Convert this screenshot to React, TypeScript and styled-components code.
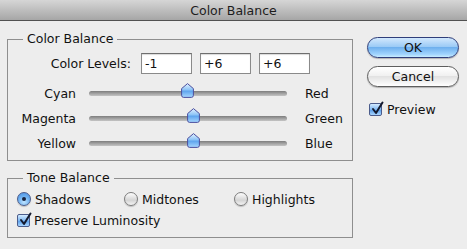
import styled, { createGlobalStyle } from 'styled-components';

const GlobalStyle = createGlobalStyle`
  html, body {
    margin: 0;
    padding: 0;
    background: #ededed;
  }
  body {
    font-family: "DejaVu Sans", "Liberation Sans", sans-serif;
    font-size: 12.5px;
    color: #111;
  }
`;

const Window = styled.div`
  width: 467px;
  height: 249px;
  background: #ededed;
  overflow: hidden;
`;

const TitleBar = styled.div`
  height: 20px;
  border-bottom: 1px solid #515151;
  background: linear-gradient(#d6d6d6, #a6a6a6);
  display: flex;
  align-items: center;
  justify-content: center;
  font-size: 12.5px;
  color: #1c1c1c;
`;

const Main = styled.div`
  display: flex;
  padding: 10px 0 0 7px;
`;

const LeftColumn = styled.div`
  width: 346px;
  display: flex;
  flex-direction: column;
  gap: 9px;
`;

const Group = styled.fieldset<{ $pb: number }>`
  margin: 0;
  padding: 0 0 ${({ $pb }) => $pb}px 0;
  border: 1px solid #8e8e8e;
  min-width: 0;
`;

const Legend = styled.legend`
  margin-left: 15px;
  padding: 0 4px;
  line-height: 16px;
  font-size: 12.5px;
`;

const LevelsRow = styled.div`
  display: flex;
  align-items: center;
  margin-top: 6px;
  height: 21px;
`;

const LevelsLabel = styled.span`
  width: 123px;
  text-align: right;
  margin-right: 10px;
`;

const Inputs = styled.div`
  display: flex;
  gap: 8px;
`;

const NumberBox = styled.div`
  box-sizing: border-box;
  width: 51px;
  height: 21px;
  border: 1px solid #8a8a8a;
  border-top-color: #6e6e6e;
  background: #fff;
  box-shadow: inset 0 1px 1px rgba(0, 0, 0, 0.15);
  padding: 1px 0 0 3px;
  line-height: 17px;
`;

const Sliders = styled.div`
  margin-top: 7px;
`;

const SliderRow = styled.div`
  display: grid;
  grid-template-columns: 68px 198px auto;
  column-gap: 13px;
  align-items: center;
  height: 25px;

  & > span:last-child {
    margin-left: 5px;
  }
`;

const SideLabel = styled.span<{ $align: 'left' | 'right' }>`
  text-align: ${({ $align }) => $align};
`;

const TrackArea = styled.div`
  position: relative;
  height: 25px;
`;

const Track = styled.div`
  position: absolute;
  left: 0;
  right: 0;
  top: 10px;
  height: 5px;
  border-radius: 3px;
  background: linear-gradient(#7d7d7d, #a9a9a9 60%, #c4c4c4);
`;

const Thumb = styled.svg`
  position: absolute;
  top: 2px;
  width: 13px;
  height: 15px;
  margin-left: -6.5px;
`;

const RadioRow = styled.div`
  display: grid;
  grid-template-columns: 107px 110px auto;
  margin: 5px 0 0 9px;
  height: 16px;
  align-items: center;
`;

const Choice = styled.label`
  display: flex;
  align-items: center;
  gap: 4px;
  white-space: nowrap;
`;

const CheckRow = styled.div`
  margin: 5px 0 0 9px;
  height: 16px;
  display: flex;
  align-items: center;
`;

const Radio = styled.span<{ $on?: boolean }>`
  position: relative;
  box-sizing: border-box;
  width: 14px;
  height: 14px;
  border-radius: 50%;
  border: 1px solid ${({ $on }) => ($on ? '#4a5c8c' : '#7c7c7c')};
  background: ${({ $on }) =>
    $on
      ? 'radial-gradient(circle at 50% 75%, #bfe4ff, #6aaef0 55%, #4a8ee0)'
      : 'linear-gradient(#fdfdfd, #d4d4d4 60%, #f4f4f4)'};
  box-shadow: 0 1px 1px rgba(0, 0, 0, 0.2);

  &::after {
    content: '';
    display: ${({ $on }) => ($on ? 'block' : 'none')};
    position: absolute;
    left: 4px;
    top: 4px;
    width: 4px;
    height: 4px;
    border-radius: 50%;
    background: #17233f;
  }
`;

const Box = styled.span`
  position: relative;
  box-sizing: border-box;
  width: 13px;
  height: 13px;
  border-radius: 2px;
  border: 1px solid #4b5c8b;
  background: linear-gradient(#d4ebff, #7fb8f2 50%, #5b9fea 55%, #a9d6ff);
  flex-shrink: 0;

  svg {
    position: absolute;
    left: 0;
    top: -3px;
    width: 14px;
    height: 14px;
  }
`;

const RightColumn = styled.div`
  margin: 6px 0 0 14px;
  width: 92px;
  display: flex;
  flex-direction: column;
`;

const Button = styled.div<{ $primary?: boolean }>`
  box-sizing: border-box;
  height: 21px;
  border-radius: 11px;
  display: flex;
  align-items: center;
  justify-content: center;
  border: 1px solid ${({ $primary }) => ($primary ? '#2f3e7a' : '#5e5e5e')};
  background: ${({ $primary }) =>
    $primary
      ? 'linear-gradient(#d2e8fd, #9ccbf6 45%, #6fb0ee 50%, #9fd3fd 85%, #c8ecff)'
      : 'linear-gradient(#ffffff, #f1f1f1 45%, #e2e2e2 50%, #f6f6f6 85%, #ffffff)'};
  box-shadow: 0 1px 1px rgba(0, 0, 0, 0.25);
  margin-bottom: ${({ $primary }) => ($primary ? '8px' : '0')};
`;

const PreviewRow = styled.div`
  display: flex;
  align-items: center;
  gap: 5px;
  margin: 15px 0 0 2px;
`;

const Check = () => (
  <Box>
    <svg viewBox="0 0 14 14">
      <path d="M3 8 L6 12 L12.5 1.5" fill="none" stroke="#141a2e" strokeWidth="2" strokeLinecap="round" strokeLinejoin="round" />
    </svg>
  </Box>
);

const sliders = [
  { left: 'Cyan', right: 'Red', value: -1 },
  { left: 'Magenta', right: 'Green', value: 6 },
  { left: 'Yellow', right: 'Blue', value: 6 },
];

const TRACK = 198;
const THUMB = 12;

const SliderThumb = ({ value }: { value: number }) => {
  const x = THUMB / 2 + ((value + 100) / 200) * (TRACK - THUMB);
  return (
    <Thumb viewBox="0 0 13 15" style={{ left: x }}>
      <defs>
        <linearGradient id={`tg${value}`} x1="0" y1="0" x2="0" y2="1">
          <stop offset="0" stopColor="#e4f2ff" />
          <stop offset="0.45" stopColor="#8cc3f6" />
          <stop offset="0.55" stopColor="#5fa5ee" />
          <stop offset="1" stopColor="#a8d8ff" />
        </linearGradient>
      </defs>
      <path
        d="M6.5 0.6 L12.4 5.6 V12.3 Q12.4 14.4 10.4 14.4 H2.6 Q0.6 14.4 0.6 12.3 V5.6 Z"
        fill={`url(#tg${value})`}
        stroke="#4b4f9e"
        strokeWidth="1"
      />
    </Thumb>
  );
};

export default function App() {
  return (
    <Window>
      <GlobalStyle />
      <TitleBar>Color Balance</TitleBar>
      <Main>
        <LeftColumn>
          <Group $pb={4}>
            <Legend>Color Balance</Legend>
            <LevelsRow>
              <LevelsLabel>Color Levels:</LevelsLabel>
              <Inputs>
                <NumberBox>-1</NumberBox>
                <NumberBox>+6</NumberBox>
                <NumberBox>+6</NumberBox>
              </Inputs>
            </LevelsRow>
            <Sliders>
              {sliders.map((s) => (
                <SliderRow key={s.left}>
                  <SideLabel $align="right">{s.left}</SideLabel>
                  <TrackArea>
                    <Track />
                    <SliderThumb value={s.value} />
                  </TrackArea>
                  <SideLabel $align="left">{s.right}</SideLabel>
                </SliderRow>
              ))}
            </Sliders>
          </Group>
          <Group $pb={9}>
            <Legend>Tone Balance</Legend>
            <RadioRow>
              <Choice><Radio $on />Shadows</Choice>
              <Choice><Radio />Midtones</Choice>
              <Choice><Radio />Highlights</Choice>
            </RadioRow>
            <CheckRow>
              <Choice><Check />Preserve Luminosity</Choice>
            </CheckRow>
          </Group>
        </LeftColumn>
        <RightColumn>
          <Button $primary>OK</Button>
          <Button>Cancel</Button>
          <PreviewRow>
            <Check />
            Preview
          </PreviewRow>
        </RightColumn>
      </Main>
    </Window>
  );
}
